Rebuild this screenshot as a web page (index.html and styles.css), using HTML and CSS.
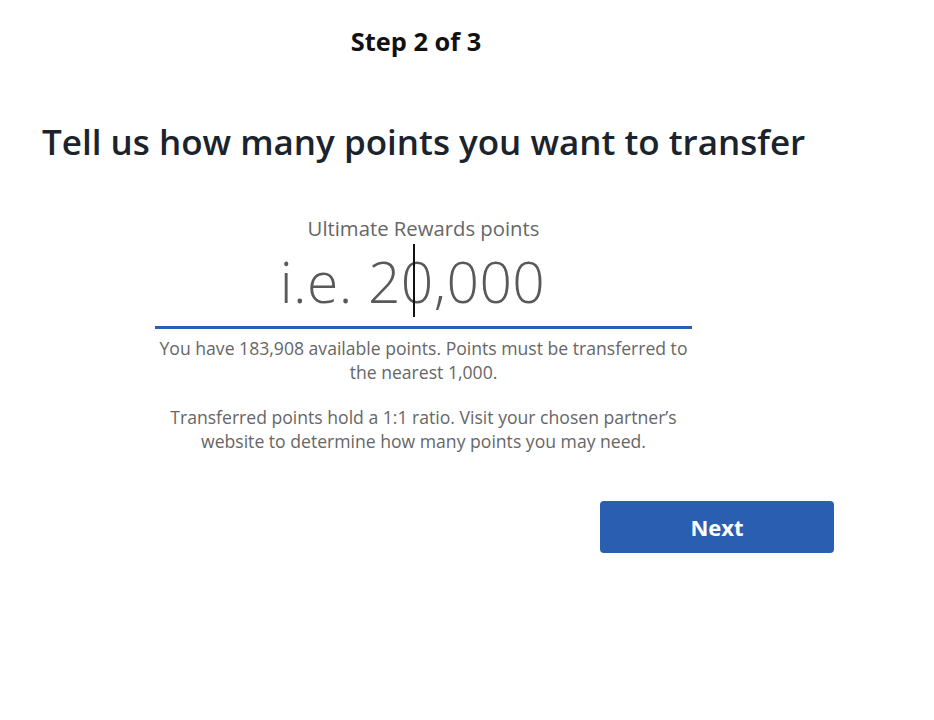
FILE: index.html
```html
<!DOCTYPE html>
<html lang="en">
<head>
    <meta charset="UTF-8">
    <title>Transfer points</title>
    <link rel="stylesheet" href="styles.css">
</head>
<body>
    <div class="page">
        <div class="step">Step 2 of 3</div>

        <h1 class="title">Tell us how many points you want to transfer</h1>

        <div class="points-field">
            <label class="field-label" for="points">Ultimate Rewards points</label>
            <div class="field-input">
                <span class="placeholder">i.e. 2<span class="caret"></span>0,000</span>
            </div>
            <p class="field-help">You have 183,908 available points. Points must be transferred to the nearest 1,000.</p>
            <p class="field-help">Transferred points hold a 1:1 ratio. Visit your chosen partner’s website to determine how many points you may need.</p>
        </div>

        <div class="actions">
            <button class="btn-next">Next</button>
        </div>
    </div>
</body>
</html>
```

FILE: styles.css
```css
body {
    margin: 0;
    background: #fff;
    font-family: 'Open Sans', sans-serif;
}

.page {
    width: 834px;
    padding-top: 24px;
}

.step {
    width: 832px;
    text-align: center;
    font-size: 25.4px;
    font-weight: 700;
    color: #111;
    line-height: 34px;
}

.title {
    margin: 64px 0 0 42px;
    font-size: 35px;
    font-weight: 600;
    color: #1b232c;
    line-height: 40px;
    white-space: nowrap;
}

/* input block */
.points-field {
    width: 537px;
    margin: 52px 0 0 155px;
    text-align: center;
}

.field-label {
    display: block;
    font-size: 20.3px;
    color: #666;
    line-height: 28px;
}

.field-input {
    border-bottom: 3px solid #2a5eb0;
    height: 84px;
    line-height: 78px;
    padding-right: 22px;
}

.placeholder {
    font-size: 57px;
    font-weight: 300;
    color: #58595b;
    position: relative;
    display: inline-block;
    letter-spacing: 0.4px;
}

.caret {
    position: absolute;
    left: 133px;
    top: 2px;
    width: 2px;
    height: 73px;
    background: #111;
}

.field-help {
    margin: 8px 0 0;
    font-size: 17.6px;
    line-height: 23.5px;
    color: #666;
}

.field-help + .field-help {
    margin-top: 22px;
}

.actions {
    display: flex;
    justify-content: flex-end;
    margin-top: 48px;
}

.btn-next {
    width: 234px;
    height: 52px;
    border: none;
    border-radius: 4px;
    background: #2a5eb0;
    color: #fff;
    font-family: 'Open Sans', sans-serif;
    font-size: 22px;
    font-weight: 700;
}
```
